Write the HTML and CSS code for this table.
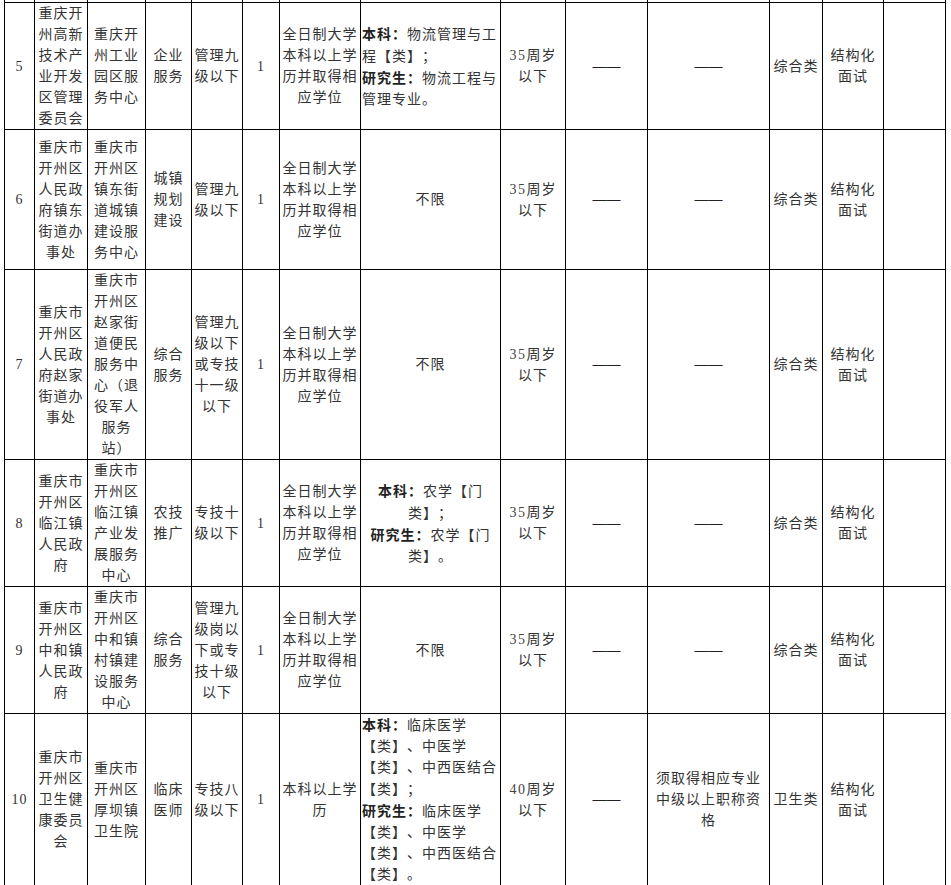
FILE: index.html
```html
<!DOCTYPE html>
<html lang="zh-CN">
<head>
<meta charset="utf-8">
<title>岗位表</title>
<link rel="stylesheet" href="styles.css">
</head>
<body>
<table class="posts">
  <colgroup>
    <col class="c1"><col class="c2"><col class="c3"><col class="c4"><col class="c5"><col class="c6"><col class="c7">
    <col class="c8"><col class="c9"><col class="c10"><col class="c11"><col class="c12"><col class="c13"><col class="c14">
  </colgroup>
  <tr class="cut">
    <td></td><td></td><td></td><td></td><td></td><td></td><td></td><td></td><td></td><td></td><td></td><td></td><td></td><td></td>
  </tr>
  <tr>
    <td>5</td>
    <td>重庆开<br>州高新<br>技术产<br>业开发<br>区管理<br>委员会</td>
    <td>重庆开<br>州工业<br>园区服<br>务中心</td>
    <td>企业<br>服务</td>
    <td>管理九<br>级以下</td>
    <td>1</td>
    <td>全日制大学<br>本科以上学<br>历并取得相<br>应学位</td>
    <td class="left"><b>本科<span class="p">：</span></b>物流管理与工<br>程【类】<span class="p">；</span><br><b>研究生<span class="p">：</span></b>物流工程与<br>管理专业。</td>
    <td><span class="num">35</span>周岁<br>以下</td>
    <td><span class="dash">——</span></td>
    <td><span class="dash">——</span></td>
    <td>综合类</td>
    <td>结构化<br>面试</td>
    <td></td>
  </tr>
  <tr class="tall">
    <td>6</td>
    <td>重庆市<br>开州区<br>人民政<br>府镇东<br>街道办<br>事处</td>
    <td>重庆市<br>开州区<br>镇东街<br>道城镇<br>建设服<br>务中心</td>
    <td>城镇<br>规划<br>建设</td>
    <td>管理九<br>级以下</td>
    <td>1</td>
    <td>全日制大学<br>本科以上学<br>历并取得相<br>应学位</td>
    <td>不限</td>
    <td><span class="num">35</span>周岁<br>以下</td>
    <td><span class="dash">——</span></td>
    <td><span class="dash">——</span></td>
    <td>综合类</td>
    <td>结构化<br>面试</td>
    <td></td>
  </tr>
  <tr>
    <td>7</td>
    <td>重庆市<br>开州区<br>人民政<br>府赵家<br>街道办<br>事处</td>
    <td>重庆市<br>开州区<br>赵家街<br>道便民<br>服务中<br>心（退<br>役军人<br>服务<br>站）</td>
    <td>综合<br>服务</td>
    <td>管理九<br>级以下<br>或专技<br>十一级<br>以下</td>
    <td>1</td>
    <td>全日制大学<br>本科以上学<br>历并取得相<br>应学位</td>
    <td>不限</td>
    <td><span class="num">35</span>周岁<br>以下</td>
    <td><span class="dash">——</span></td>
    <td><span class="dash">——</span></td>
    <td>综合类</td>
    <td>结构化<br>面试</td>
    <td></td>
  </tr>
  <tr>
    <td>8</td>
    <td>重庆市<br>开州区<br>临江镇<br>人民政<br>府</td>
    <td>重庆市<br>开州区<br>临江镇<br>产业发<br>展服务<br>中心</td>
    <td>农技<br>推广</td>
    <td>专技十<br>级以下</td>
    <td>1</td>
    <td>全日制大学<br>本科以上学<br>历并取得相<br>应学位</td>
    <td><b>本科<span class="p">：</span></b>农学【门<br>类】<span class="p">；</span><br><b>研究生<span class="p">：</span></b>农学【门<br>类】。</td>
    <td><span class="num">35</span>周岁<br>以下</td>
    <td><span class="dash">——</span></td>
    <td><span class="dash">——</span></td>
    <td>综合类</td>
    <td>结构化<br>面试</td>
    <td></td>
  </tr>
  <tr>
    <td>9</td>
    <td>重庆市<br>开州区<br>中和镇<br>人民政<br>府</td>
    <td>重庆市<br>开州区<br>中和镇<br>村镇建<br>设服务<br>中心</td>
    <td>综合<br>服务</td>
    <td>管理九<br>级岗以<br>下或专<br>技十级<br>以下</td>
    <td>1</td>
    <td>全日制大学<br>本科以上学<br>历并取得相<br>应学位</td>
    <td>不限</td>
    <td><span class="num">35</span>周岁<br>以下</td>
    <td><span class="dash">——</span></td>
    <td><span class="dash">——</span></td>
    <td>综合类</td>
    <td>结构化<br>面试</td>
    <td></td>
  </tr>
  <tr>
    <td>10</td>
    <td>重庆市<br>开州区<br>卫生健<br>康委员<br>会</td>
    <td>重庆市<br>开州区<br>厚坝镇<br>卫生院</td>
    <td>临床<br>医师</td>
    <td>专技八<br>级以下</td>
    <td>1</td>
    <td>本科以上学<br>历</td>
    <td class="left"><b>本科<span class="p">：</span></b>临床医学<br>【类】、中医学<br>【类】、中西医结合<br>【类】<span class="p">；</span><br><b>研究生<span class="p">：</span></b>临床医学<br>【类】、中医学<br>【类】、中西医结合<br>【类】。</td>
    <td><span class="num">40</span>周岁<br>以下</td>
    <td><span class="dash">——</span></td>
    <td>须取得相应专业<br>中级以上职称资<br>格</td>
    <td>卫生类</td>
    <td>结构化<br>面试</td>
    <td></td>
  </tr>
</table>
</body>
</html>
```
FILE: styles.css
```css
html, body {
  margin: 0;
  padding: 0;
  background: #ffffff;
}

.posts {
  margin-left: 4px;
  border-collapse: collapse;
  table-layout: fixed;
  width: 941px;
  font-family: "Liberation Serif", "Noto Sans CJK SC", serif;
  font-size: 14px;
  line-height: 21px;
  letter-spacing: 1px;
  color: #333333;
  text-spacing-trim: space-all;
  font-kerning: none;
}

.posts td {
  border: 1px solid #000000;
  padding: 0 1px;
  text-align: center;
  vertical-align: middle;
  white-space: nowrap;
}

.posts b {
  font-weight: bold;
  color: #222222;
}

.posts .p {
  font-family: "Noto Sans CJK TC", "Noto Sans CJK SC", sans-serif;
}

.posts .num {
  letter-spacing: 1.5px;
  color: #444444;
}

.posts td.left {
  text-align: left;
}

.posts .dash {
  font-family: "Liberation Sans", sans-serif;
  letter-spacing: 0;
  color: #222222;
}

.posts tr.cut td {
  border-top: none;
  height: 2px;
  line-height: 0;
  padding: 0;
}

.posts tr.tall td {
  height: 139px;
}

.c1 { width: 30px; }
.c2 { width: 53px; }
.c3 { width: 58px; }
.c4 { width: 46px; }
.c5 { width: 51px; }
.c6 { width: 37px; }
.c7 { width: 81px; }
.c8 { width: 140px; }
.c9 { width: 65px; }
.c10 { width: 82px; }
.c11 { width: 122px; }
.c12 { width: 53px; }
.c13 { width: 61px; }
.c14 { width: 62px; }
```
